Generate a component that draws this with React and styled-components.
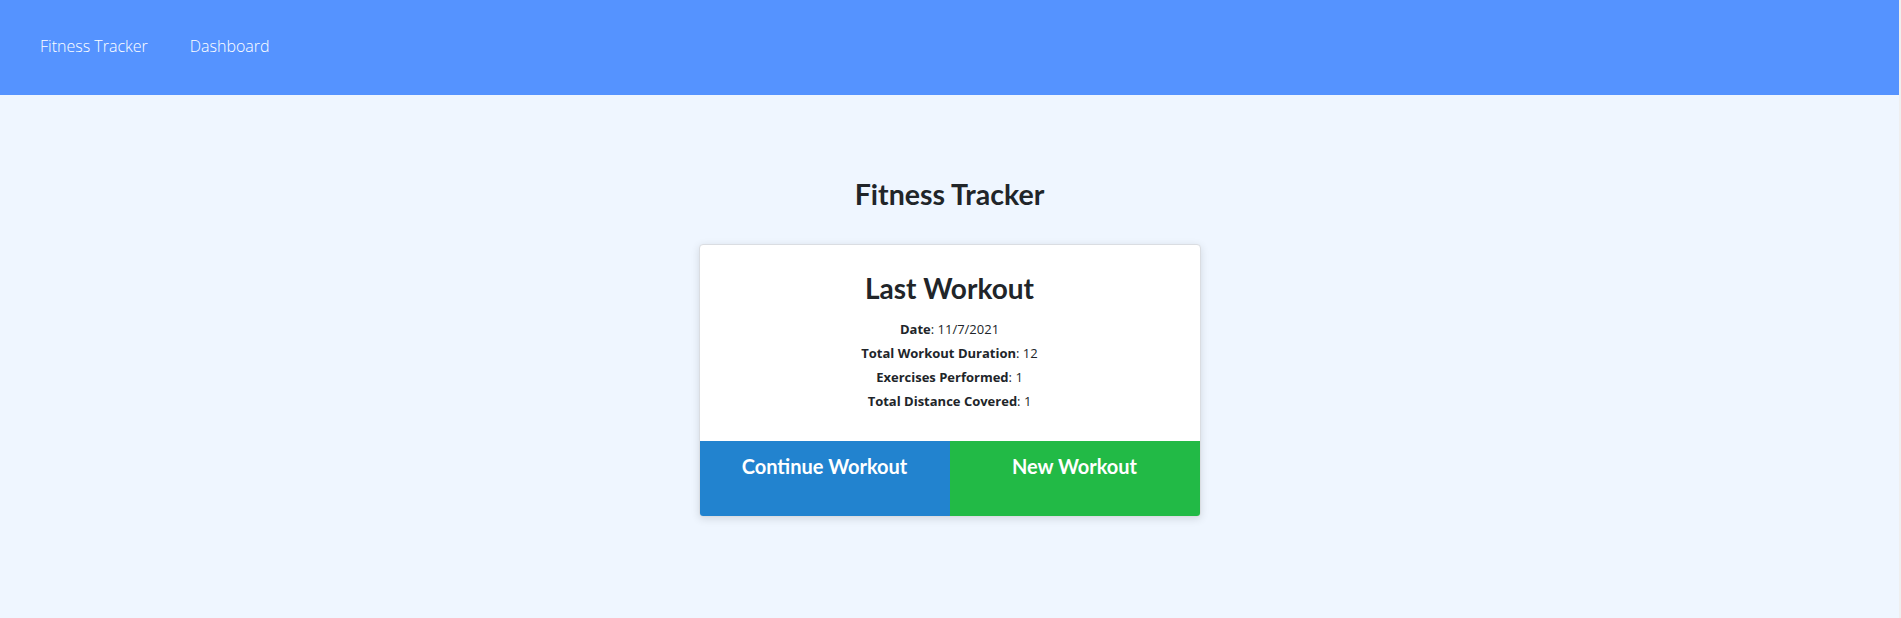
import React from 'react'
import styled, {createGlobalStyle} from "styled-components"

const GlobalStyle = createGlobalStyle`
  html, body {
    margin: 0;
    padding: 0;
    background: #EFEFEF;
  }
  body {
    font-family: "Open Sans", "Noto Sans", sans-serif;
    color: #212529;
  }
`

const Page = styled.div`
  min-height: 618px;
  margin-right: 2px;
  background: #EFF6FF;
`

const Nav = styled.nav`
  height: 95px;
  background: #5593FF;
  display: flex;
  align-items: center;
  gap: 42px;
  padding-left: 40px;
`

const NavLink = styled.a`
  color: #ffffff;
  font-family: "Open Sans", sans-serif;
  font-weight: 300;
  font-size: 16px;
  text-decoration: none;
  margin-top: -4px;
`

const Main = styled.main`
  display: flex;
  flex-direction: column;
  align-items: center;
  padding-top: 82px;
`

const Title = styled.h1`
  font-family: Lato, sans-serif;
  font-weight: 700;
  font-size: 28.5px;
  line-height: 1.2;
  margin: 0 0 33px;
`

const Card = styled.div`
  width: 500px;
  background: #ffffff;
  border: 1px solid #dadde2;
  border-radius: 4px;
  box-shadow: 0 2px 8px rgba(0, 0, 0, 0.12);
  overflow: hidden;
  text-align: center;
`

const CardBody = styled.div`
  padding: 27px 20px 28px;
`

const CardTitle = styled.h2`
  font-family: Lato, sans-serif;
  font-weight: 700;
  font-size: 28px;
  line-height: 1.2;
  margin: 0 0 11px;
`

const Stat = styled.p`
  margin: 0;
  font-size: 13px;
  line-height: 24px;
`

const Label = styled.span`
  font-family: "Open Sans", sans-serif;
  font-weight: 700;
`

const Actions = styled.div`
  display: flex;
`

const Action = styled.button`
  flex: 1;
  height: 75px;
  border: none;
  padding: 13px 0 0;
  display: flex;
  justify-content: center;
  align-items: flex-start;
  background: ${p => p.color};
  color: #ffffff;
  font-family: Lato, sans-serif;
  font-weight: 700;
  font-size: 20px;
  cursor: pointer;
`

const stats = [
    ["Date", "11/7/2021"],
    ["Total Workout Duration", "12"],
    ["Exercises Performed", "1"],
    ["Total Distance Covered", "1"],
]

const App = () => {
    return (
        <Page>
            <GlobalStyle/>
            <Nav>
                <NavLink href="#">Fitness Tracker</NavLink>
                <NavLink href="#">Dashboard</NavLink>
            </Nav>
            <Main>
                <Title>Fitness Tracker</Title>
                <Card>
                    <CardBody>
                        <CardTitle>Last Workout</CardTitle>
                        {stats.map(([k, v]) => (
                            <Stat key={k}><Label>{k}</Label>: {v}</Stat>
                        ))}
                    </CardBody>
                    <Actions>
                        <Action color="#2283CF">Continue Workout</Action>
                        <Action color="#22BA46">New Workout</Action>
                    </Actions>
                </Card>
            </Main>
        </Page>
    )
}

export default App
